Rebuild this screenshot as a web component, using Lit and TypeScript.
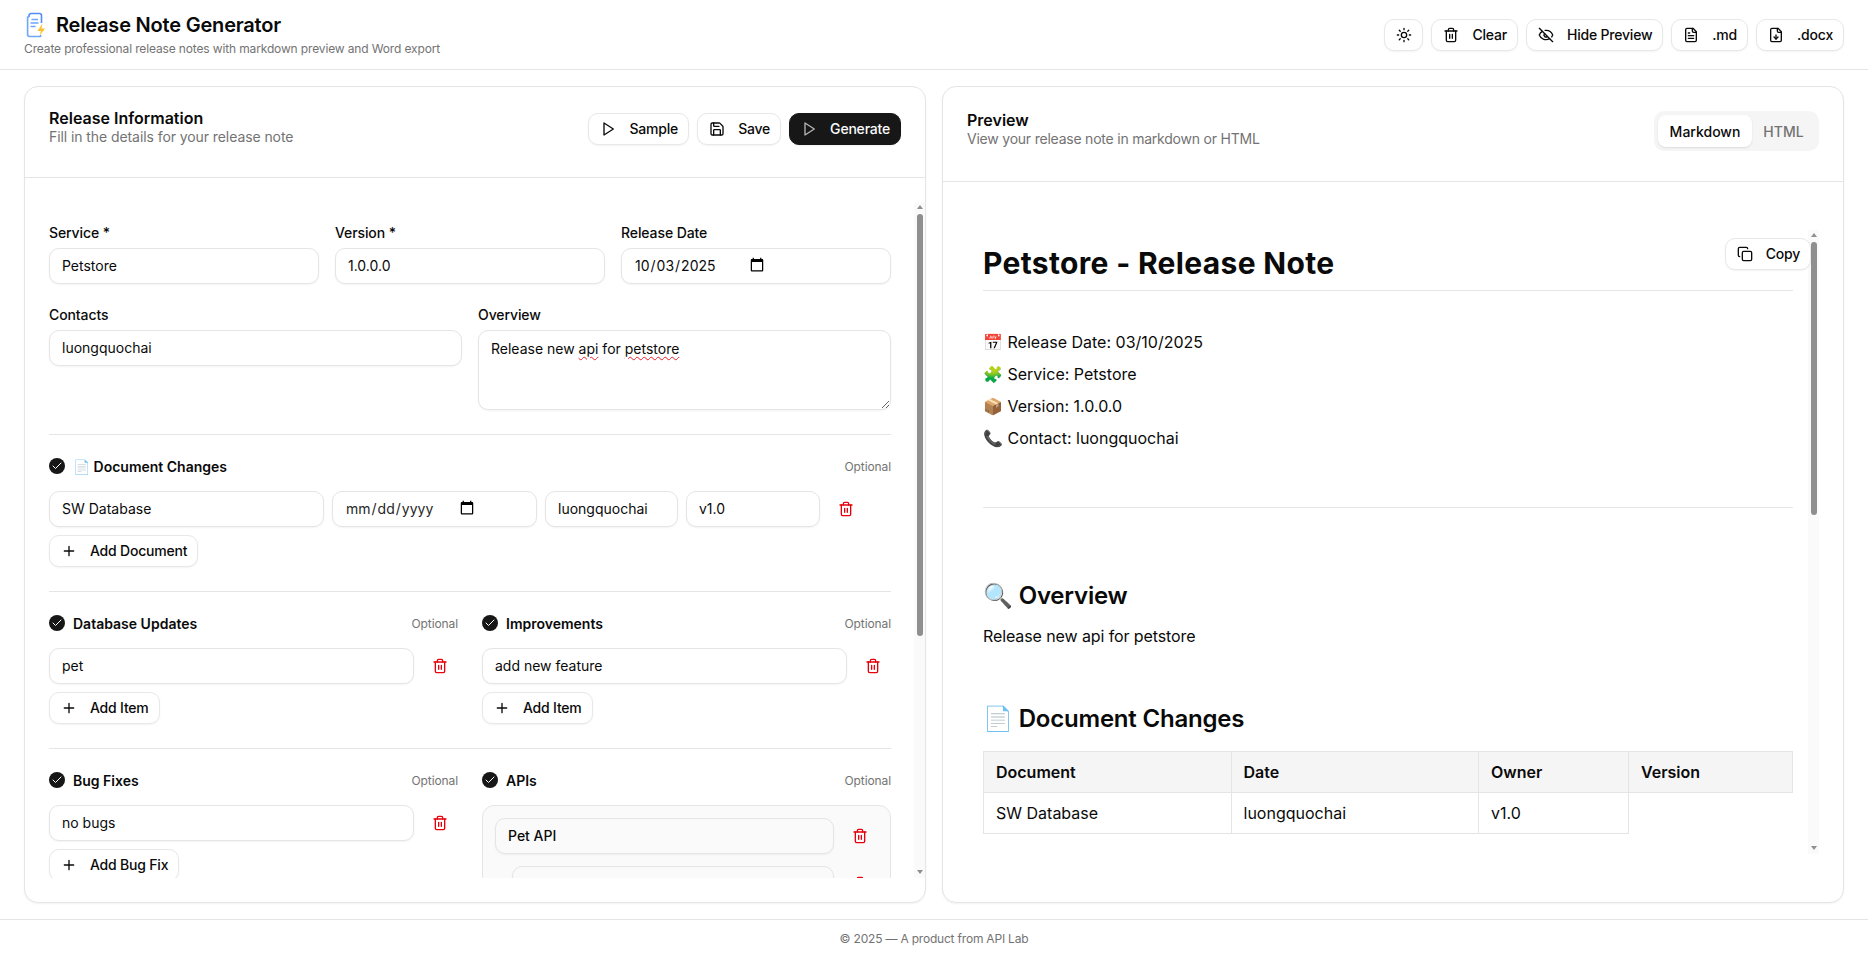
import { LitElement, html, css, svg } from "lit";
import { customElement } from "lit/decorators.js";

const I: Record<string, unknown> = {
  sun: svg`<circle cx="12" cy="12" r="4"/><path d="M12 2v2M12 20v2M4.93 4.93l1.41 1.41M17.66 17.66l1.41 1.41M2 12h2M20 12h2M6.34 17.66l-1.41 1.41M19.07 4.93l-1.41 1.41"/>`,
  trash: svg`<path d="M3 6h18"/><path d="M19 6v14c0 1-1 2-2 2H7c-1 0-2-1-2-2V6"/><path d="M8 6V4c0-1 1-2 2-2h4c1 0 2 1 2 2v2"/><path d="M10 11v6M14 11v6"/>`,
  eyeoff: svg`<path d="M10.733 5.076a10.744 10.744 0 0 1 11.205 6.575 1 1 0 0 1 0 .696 10.747 10.747 0 0 1-1.444 2.49"/><path d="M14.084 14.158a3 3 0 0 1-4.242-4.242"/><path d="M17.479 17.499a10.75 10.75 0 0 1-15.417-5.151 1 1 0 0 1 0-.696 10.75 10.75 0 0 1 4.446-5.143"/><path d="m2 2 20 20"/>`,
  filetext: svg`<path d="M15 2H6a2 2 0 0 0-2 2v16a2 2 0 0 0 2 2h12a2 2 0 0 0 2-2V7Z"/><path d="M14 2v4a2 2 0 0 0 2 2h4"/><path d="M10 9H8M16 13H8M16 17H8"/>`,
  filedown: svg`<path d="M15 2H6a2 2 0 0 0-2 2v16a2 2 0 0 0 2 2h12a2 2 0 0 0 2-2V7Z"/><path d="M14 2v4a2 2 0 0 0 2 2h4"/><path d="M12 18v-6"/><path d="m9 15 3 3 3-3"/>`,
  play: svg`<polygon points="6 3 20 12 6 21 6 3"/>`,
  save: svg`<path d="M15.2 3a2 2 0 0 1 1.4.6l3.8 3.8a2 2 0 0 1 .6 1.4V19a2 2 0 0 1-2 2H5a2 2 0 0 1-2-2V5a2 2 0 0 1 2-2z"/><path d="M17 21v-7a1 1 0 0 0-1-1H8a1 1 0 0 0-1 1v7"/><path d="M7 3v4a1 1 0 0 0 1 1h7"/>`,
  plus: svg`<path d="M5 12h14M12 5v14"/>`,
  copy: svg`<rect x="8" y="8" width="14" height="14" rx="2"/><path d="M4 16c-1.1 0-2-.9-2-2V4c0-1.1.9-2 2-2h10c1.1 0 2 .9 2 2"/>`,
  check: svg`<path d="M20 6 9 17l-5-5"/>`,
};

const icon = (n: string, cls = "") =>
  html`<svg class="ic ${cls}" viewBox="0 0 24 24" fill="none" stroke="currentColor" stroke-width="2" stroke-linecap="round" stroke-linejoin="round">${I[n]}</svg>`;

const btn = (i: string, label: string, cls = "") =>
  html`<button class="btn ${cls}">${icon(i)}<span>${label}</span></button>`;

const trash = () => html`<button class="del" aria-label="Delete">${icon("trash")}</button>`;

const sectionHead = (title: unknown) => html`
  <div class="sec-head">
    <span class="chk">${icon("check")}</span>
    <span class="sec-title">${title}</span>
    <span class="opt">Optional</span>
  </div>`;

const listSection = (title: string, value: string, add: string) => html`
  <section>
    ${sectionHead(title)}
    <div class="item"><input class="inp" .value=${value} />${trash()}</div>
    ${btn("plus", add)}
  </section>`;

const scrollbar = (cls: string) => html`
  <div class="sb ${cls}" aria-hidden="true">
    <span class="arrow up"></span>
    <span class="thumb"></span>
    <span class="arrow down"></span>
  </div>`;

@customElement("app-root")
export class AppRoot extends LitElement {
  static styles = css`
    :host {
      display: flex;
      flex-direction: column;
      height: 100vh;
      overflow: hidden;
      font-family: Inter, "Noto Sans", sans-serif;
      font-size: 14px;
      color: #0a0a0a;
      background: #fff;
    }
    * { box-sizing: border-box; }
    .ic { width: 16px; height: 16px; flex: none; }

    header {
      flex: none;
      height: 70px;
      border-bottom: 1px solid #e5e5e5;
      display: flex;
      align-items: center;
      justify-content: space-between;
      padding: 0 24px;
    }
    .brand { display: flex; flex-direction: column; gap: 2px; padding-bottom: 1px; }
    .brand-row { display: flex; align-items: center; gap: 8px; }
    .logo { width: 24px; height: 28px; flex: none; }
    h1.app { margin: 0; font-size: 20px; line-height: 24px; font-weight: 600; letter-spacing: -0.2px; }
    .tag { margin: 0; font-size: 12px; line-height: 16px; color: #737373; letter-spacing: -0.14px; }
    .tools { display: flex; gap: 8px; }

    .btn {
      display: inline-flex;
      align-items: center;
      gap: 13px;
      height: 32px;
      padding: 0 10px 0 11px;
      border: 1px solid #e8e8e8;
      border-radius: 10px;
      background: #fff;
      box-shadow: 0 1px 2px rgba(0, 0, 0, 0.05);
      font: 500 14px/20px Inter, sans-serif;
      letter-spacing: -0.2px;
      color: #0a0a0a;
      white-space: nowrap;
      width: max-content;
    }
    .btn.dark { background: #171717; border-color: #171717; color: #fafafa; }
    .btn.dark .ic { color: #b5b5b5; }

    main {
      flex: 1;
      min-height: 0;
      display: grid;
      grid-template-columns: 1fr 1fr;
      gap: 16px;
      padding: 16px 24px;
    }
    .card {
      min-height: 0;
      display: flex;
      flex-direction: column;
      border: 1px solid #e5e5e5;
      border-radius: 14px;
      box-shadow: 0 1px 2px rgba(0, 0, 0, 0.05);
      background: #fff;
    }
    .card-head {
      flex: none;
      display: flex;
      align-items: center;
      justify-content: space-between;
      border-bottom: 1px solid #e5e5e5;
      padding: 0 24px 6px;
    }
    .h-left { height: 91px; }
    .h-right { height: 95px; }
    .titles { padding-bottom: 3px; }
    .card-title { font-size: 16px; line-height: 19px; font-weight: 600; }
    .card-sub { font-size: 14px; line-height: 18px; color: #737373; letter-spacing: -0.08px; }
    .h-right .card-sub { letter-spacing: -0.22px; }
    .actions { display: flex; gap: 8px; }

    .tabs { display: flex; padding: 4px; background: #f5f5f5; border-radius: 10px; width: 165px; height: 40px; }
    .tab { display: flex; align-items: center; justify-content: center; font-weight: 500; color: #737373; border-radius: 8px; }
    .tab.on { width: 94px; background: #fff; color: #0a0a0a; box-shadow: 0 1px 2px rgba(0, 0, 0, 0.1); }
    .tab.off { flex: 1; }

    .sb {
      flex: none;
      width: 11px;
      background: #fafafa;
      display: flex;
      flex-direction: column;
      align-items: center;
      padding: 3px 0 4px;
    }
    .arrow { width: 0; height: 0; border-left: 3.5px solid transparent; border-right: 3.5px solid transparent; }
    .arrow.up { border-bottom: 4px solid #8f8f8f; }
    .arrow.down { border-top: 4px solid #8f8f8f; margin-top: auto; }
    .thumb { width: 6px; margin-top: 5px; border-radius: 3px; background: #8f8f8f; }
    .sb-left .thumb { height: 422px; }
    .sb-right .thumb { height: 273px; }

    .form-wrap { flex: 1; min-height: 0; padding: 24px 0; display: flex; }
    .form {
      flex: 1;
      min-width: 0;
      overflow-y: scroll;
      scrollbar-width: none;
      padding: 21px 23px 24px 24px;
    }
    .row { display: grid; gap: 16px; }
    .row-3 { grid-template-columns: 1fr 1fr 1fr; }
    .row-2 { grid-template-columns: 1fr 1fr; margin-top: 21px; }
    .field { display: flex; flex-direction: column; gap: 5px; min-width: 0; }
    label { font-weight: 500; line-height: 20px; letter-spacing: -0.1px; }
    .inp {
      display: block;
      width: 100%;
      min-width: 0;
      height: 36px;
      border: 1px solid #e5e5e5;
      border-radius: 10px;
      padding: 0 12px 2px;
      font: 400 14px Inter, sans-serif;
      color: #0a0a0a;
      background: #fff;
      box-shadow: 0 1px 2px rgba(0, 0, 0, 0.05);
      outline: none;
    }
    input[type="date"]::-webkit-datetime-edit { flex: 0 0 auto; }
    input[type="date"]::-webkit-calendar-picker-indicator { margin: 0 0 0 6px; padding: 0; width: 16px; height: 16px; }
    input[type="date"]::-webkit-date-and-time-value { text-align: left; }
    input.empty { color: #262626; }
    .area {
      height: 80px;
      min-height: 64px;
      padding: 8px 12px;
      line-height: 20px;
      overflow: auto;
      resize: vertical;
    }
    .sq { text-decoration: underline wavy #e5202e 1px; text-underline-offset: 2px; }
    hr { border: 0; border-top: 1px solid #e5e5e5; margin: 24px 0 21px; }
    .sec-head { display: flex; align-items: center; height: 20px; margin-bottom: 15px; }
    .chk {
      width: 16px;
      height: 16px;
      border-radius: 50%;
      background: #171717;
      color: #fff;
      display: flex;
      align-items: center;
      justify-content: center;
      margin-right: 8px;
    }
    .chk .ic { width: 12px; height: 12px; }
    .sec-title { font-weight: 600; flex: 1; }
    .opt { font-size: 12px; color: #737373; letter-spacing: -0.1px; }
    .doc-row { display: grid; grid-template-columns: 275px 205px 133px 134px 36px; gap: 8px; margin-bottom: 8px; }
    .item { display: grid; grid-template-columns: 1fr 36px; gap: 8px; margin-bottom: 8px; }
    .del {
      width: 36px;
      height: 36px;
      border: 0;
      padding: 0;
      background: transparent;
      color: #e7000b;
      display: flex;
      align-items: center;
      justify-content: center;
    }
    .cols { display: grid; grid-template-columns: 1fr 1fr; gap: 24px; }
    .panel { border: 1px solid #e5e5e5; border-radius: 12px; background: #fafafa; padding: 12px; }
    .panel .inp { background: #fafafa; }
    .panel input.api-name { font-weight: 500; }
    .sub { margin-left: 17px; }
    .panel .item { margin-bottom: 12px; grid-template-columns: 1fr 36px; }
    .panel .btn { margin-top: 4px; }

    .prev-wrap { flex: 1; min-height: 0; padding: 48px 24px; display: flex; position: relative; }
    .prev {
      flex: 1;
      min-width: 0;
      overflow-y: scroll;
      scrollbar-width: none;
      padding: 15px 15px 24px 16px;
      font-size: 16px;
    }
    .copy { position: absolute; top: 56px; right: 32px; }
    .prev h2.doc {
      margin: 0;
      font-size: 30px;
      line-height: 36px;
      font-weight: 700;
      letter-spacing: 0.33px;
      padding-bottom: 9px;
      border-bottom: 1px solid #e5e5e5;
    }
    .meta { margin-top: 35px; }
    .meta p { margin: 0; line-height: 32px; }
    .prev hr { margin: 53px 0 0; }
    .prev h3 { margin: 0; font-size: 24px; line-height: 32px; font-weight: 600; letter-spacing: -0.2px; }
    .prev p.body { margin: 0; line-height: 24px; letter-spacing: -0.1px; }
    .prev h3.h-ov { margin-top: 72px; margin-bottom: 12px; }
    .prev h3.h-next { margin-top: 55px; margin-bottom: 16px; }
    table { border-collapse: collapse; width: 100%; table-layout: fixed; }
    th, td { border: 1px solid #e5e5e5; padding: 8px 12px; line-height: 24px; text-align: left; font-size: 16px; }
    th { background: #f5f5f5; font-weight: 600; }
    td:empty { border: 0; }
    .c1, .c2 { width: 247.5px; }
    .c3 { width: 150px; }
    ul { margin: 0; padding-left: 24px; line-height: 28px; }

    footer {
      flex: none;
      height: 37px;
      border-top: 1px solid #e5e5e5;
      display: flex;
      align-items: center;
      justify-content: center;
      font-size: 12px;
      letter-spacing: -0.2px;
      color: #737373;
      padding-top: 1px;
    }
  `;

  render() {
    return html`
      <header>
        <div class="brand">
          <div class="brand-row">
            <svg class="logo" viewBox="0 0 24 28" fill="none">
              <path d="M7 2.500h8.500a2 2 0 0 1 2 2V12M7 2.500a2 2 0 0 0-2 2V6" stroke="#4f8ef7" stroke-width="1.6"/>
              <path d="M5 6H3.600v17.500a2 2 0 0 0 2 2h11v-1.600" stroke="#6ea6fa" stroke-width="1.6" stroke-linejoin="round"/>
              <path d="M7.500 8.500h6.500M6.500 12h8M6.500 15.500h5" stroke="#6ea6fa" stroke-width="1.5"/>
              <path d="M18.500 12.500l-5 7.500h3.500l-1.500 5 5.500-7.500h-3.500z" fill="#fbc02d"/>
            </svg>
            <h1 class="app">Release Note Generator</h1>
          </div>
          <p class="tag">Create professional release notes with markdown preview and Word export</p>
        </div>
        <div class="tools">
          <button class="btn" aria-label="Theme">${icon("sun")}</button>
          ${btn("trash", "Clear")} ${btn("eyeoff", "Hide Preview")} ${btn("filetext", ".md")} ${btn("filedown", ".docx")}
        </div>
      </header>

      <main>
        <div class="card">
          <div class="card-head h-left">
            <div class="titles">
              <div class="card-title">Release Information</div>
              <div class="card-sub">Fill in the details for your release note</div>
            </div>
            <div class="actions">
              ${btn("play", "Sample")} ${btn("save", "Save")} ${btn("play", "Generate", "dark")}
            </div>
          </div>
          <div class="form-wrap">
            <div class="form">
              <div class="row row-3">
                <div class="field"><label>Service *</label><input class="inp" value="Petstore" /></div>
                <div class="field"><label>Version *</label><input class="inp" value="1.0.0.0" /></div>
                <div class="field"><label>Release Date</label><input class="inp" type="date" value="2025-10-03" /></div>
              </div>
              <div class="row row-2">
                <div class="field"><label>Contacts</label><input class="inp" value="luongquochai" /></div>
                <div class="field">
                  <label>Overview</label>
                  <div class="inp area" role="textbox">Release new <span class="sq">api</span> for <span class="sq">petstore</span></div>
                </div>
              </div>
              <hr />
              <section>
                ${sectionHead("📄 Document Changes")}
                <div class="doc-row">
                  <input class="inp" value="SW Database" />
                  <input class="inp empty" type="date" />
                  <input class="inp" value="luongquochai" />
                  <input class="inp" value="v1.0" />
                  ${trash()}
                </div>
                ${btn("plus", "Add Document")}
              </section>
              <hr />
              <div class="cols">
                ${listSection("Database Updates", "pet", "Add Item")}
                ${listSection("Improvements", "add new feature", "Add Item")}
              </div>
              <hr />
              <div class="cols">
                ${listSection("Bug Fixes", "no bugs", "Add Bug Fix")}
                <section>
                  ${sectionHead("APIs")}
                  <div class="panel">
                    <div class="item"><input class="inp api-name" .value=${"Pet API"} />${trash()}</div>
                    <div class="item sub"><input class="inp" .value=${"GET /pet/{petId}"} />${trash()}</div>
                    <div class="item sub"><input class="inp" .value=${"POST /pet"} />${trash()}</div>
                    ${btn("plus", "Add Endpoint")}
                  </div>
                </section>
              </div>
            </div>
            ${scrollbar("sb-left")}
          </div>
        </div>

        <div class="card">
          <div class="card-head h-right">
            <div class="titles">
              <div class="card-title">Preview</div>
              <div class="card-sub">View your release note in markdown or HTML</div>
            </div>
            <div class="tabs">
              <div class="tab on">Markdown</div>
              <div class="tab off">HTML</div>
            </div>
          </div>
          <div class="prev-wrap">
            <div class="prev">
              <h2 class="doc">Petstore - Release Note</h2>
              <div class="meta">
                <p>📅 Release Date: 03/10/2025</p>
                <p>🧩 Service: Petstore</p>
                <p>📦 Version: 1.0.0.0</p>
                <p>📞 Contact: luongquochai</p>
              </div>
              <hr />
              <h3 class="h-ov">🔍 Overview</h3>
              <p class="body">Release new api for petstore</p>
              <h3 class="h-next">📄 Document Changes</h3>
              <table>
                <thead><tr><th class="c1">Document</th><th class="c2">Date</th><th class="c3">Owner</th><th>Version</th></tr></thead>
                <tbody><tr><td>SW Database</td><td>luongquochai</td><td>v1.0</td><td></td></tr></tbody>
              </table>
              <h3 class="h-next">🗄️ Database Updates</h3>
              <ul><li>pet</li></ul>
              <h3 class="h-next">✨ Improvements</h3>
              <ul><li>add new feature</li></ul>
              <h3 class="h-next">🐞 Bug Fixes</h3>
              <ul><li>no bugs</li></ul>
              <h3 class="h-next">🔌 APIs</h3>
              <ul><li>Pet API</li></ul>
            </div>
            ${scrollbar("sb-right")}
            <button class="btn copy">${icon("copy")}<span>Copy</span></button>
          </div>
        </div>
      </main>

      <footer>© 2025 — A product from API Lab</footer>
    `;
  }
}
